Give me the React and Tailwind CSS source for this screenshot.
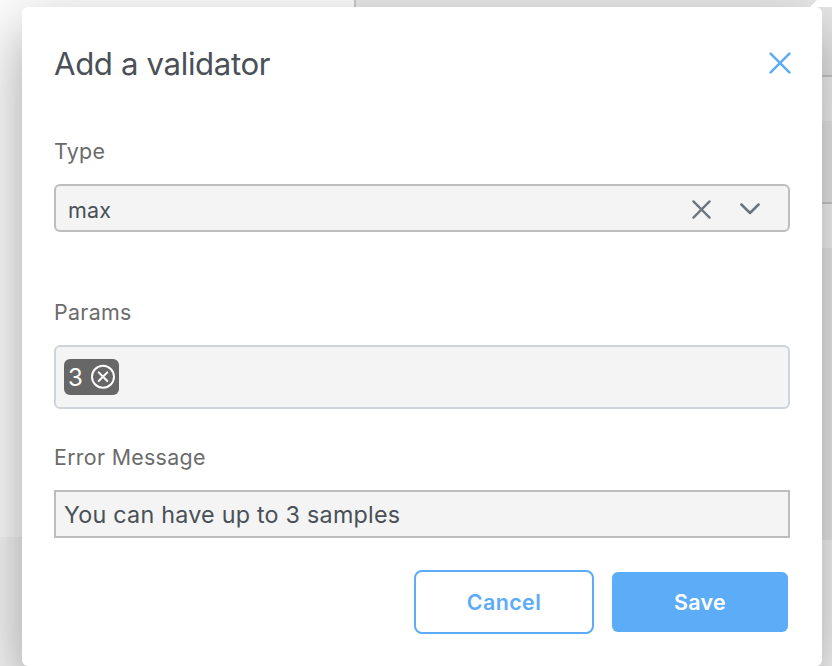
const inputBox = "w-full border-2 bg-[#f4f4f4]";
const label = "text-[21.4px] leading-7 text-[#6b6b6b]";

function Cross({ className, strokeWidth }) {
  return (
    <svg className={className} viewBox="0 0 20 20" fill="none" stroke="currentColor" strokeWidth={strokeWidth} strokeLinecap="round">
      <path d="M1.5 1.5 18.5 18.5M18.5 1.5 1.5 18.5" />
    </svg>
  );
}

function Backdrop() {
  return (
    <div className="flex h-full w-full">
      <div className="flex w-[354px] flex-col">
        <div className="h-[537px] bg-[#fcfcfc]" />
        <div className="flex-1 bg-[#f3f3f3]" />
      </div>
      <div className="w-[2px] bg-[#c8c8c8]" />
      <div className="flex flex-1 flex-col">
        <div className="h-[75px] bg-[#e8e8e8]" />
        <div className="h-[2px] bg-[#cacaca]" />
        <div className="h-[44px] bg-[#f4f4f4]" />
        <div className="h-[81px] bg-[#ebebeb]" />
        <div className="h-[2px] bg-[#cccccc]" />
        <div className="h-[44px] bg-[#f7f7f7]" />
        <div className="h-[292px] bg-[#ececec]" />
        <div className="flex-1 bg-[#f7f7f7]" />
      </div>
    </div>
  );
}

export default function App() {
  return (
    <div className="relative h-[666px] w-[832px] overflow-hidden font-['Inter',sans-serif]">
      <Backdrop />
      <div className="absolute left-[22px] top-[7px] flex h-[659px] w-[800px] flex-col rounded-md bg-white px-8 shadow-[0_24px_60px_rgba(0,0,0,0.36)]">
        <header className="flex h-[114px] items-center justify-between">
          <h2 className="mb-px text-[31.2px] leading-10 tracking-[-0.37px] text-[#495057]">Add a validator</h2>
          <Cross className="mb-0.5 mr-[-1px] size-[22px] text-[#5cacf8]" strokeWidth={2.3} />
        </header>

        <label className={`mt-4 tracking-[0.3px] ${label}`}>Type</label>
        <div className={`${inputBox} mt-[19px] flex h-12 items-center rounded-md border-[#bdbdbd] pl-3 pr-7 text-[21.5px] text-[#495057]`}>
          <span className="mt-1 flex-1 tracking-[0.2px]">max</span>
          <Cross className="mr-[29px] mt-[3px] size-[19px] text-[#6c757d]" strokeWidth={2.4} />
          <svg className="mt-px h-3 w-5 text-[#6c757d]" viewBox="0 0 20 12" fill="none" stroke="currentColor" strokeWidth="2.5" strokeLinecap="round" strokeLinejoin="round">
            <path d="M1.4 1.5 10 10 18.6 1.5" />
          </svg>
        </div>

        <label className={`mt-[66px] tracking-[0.32px] ${label}`}>Params</label>
        <div className={`${inputBox} mt-[19px] flex h-16 items-center rounded-md border-[#ced4da] px-2`}>
          <span className="flex h-9 w-[55px] items-center justify-between rounded-md bg-[#676767] pl-1 pr-[3px] text-[24px] text-white">
            <span className="mt-0.5 tracking-[-0.5px]">3</span>
            <svg className="size-[26px]" viewBox="0 0 26 26" fill="none" stroke="currentColor" strokeWidth="2" strokeLinecap="round">
              <circle cx="13" cy="12.7" r="11" />
              <path d="m8.7 8.4 8.6 8.6M17.3 8.4l-8.6 8.6" />
            </svg>
          </span>
        </div>

        <label className={`mt-[34px] tracking-[0.3px] ${label}`}>Error Message</label>
        <div className={`${inputBox} mt-[19px] flex h-12 items-center border-[#bdbdbd] pl-2 text-[23.3px] text-[#495057]`}>
          <span className="mt-0.5 tracking-[0.24px]">You can have up to 3 samples</span>
        </div>

        <footer className="mt-8 flex items-center justify-end gap-[18px] pr-[2px]">
          <button className="h-16 w-[180px] rounded-lg border-2 border-[#5cacf8] text-[21.4px] font-semibold tracking-[0.45px] text-[#5cacf8]">Cancel</button>
          <button className="h-[60px] w-44 rounded-md bg-[#5cacf8] text-[21.4px] font-semibold tracking-[0.35px] text-white">Save</button>
        </footer>
      </div>
      <div className="absolute right-0 top-0 h-[7px] w-[22px] bg-white [clip-path:polygon(7px_0,100%_0,100%_100%,0_100%)]" />
    </div>
  );
}
